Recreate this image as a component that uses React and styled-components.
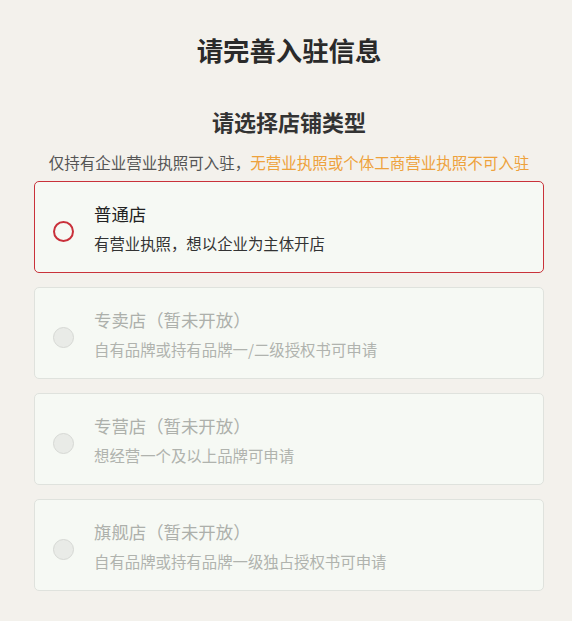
import React from "react";
import styled, { createGlobalStyle } from "styled-components";

const Global = createGlobalStyle`
  html, body { margin: 0; padding: 0; background: #f3f1ec; }
  body { font-family: "Noto Sans CJK SC", "Noto Sans", sans-serif; }
  * { box-sizing: border-box; }
`;

const Page = styled.div`
  width: 572px;
  min-height: 621px;
  background: #f3f1ec;
  padding: 32px 28px 0 34px;
`;

const Title = styled.h1`
  margin: 0;
  font-size: 26.4px;
  line-height: 36px;
  font-weight: 700;
  color: #2a2a2a;
  text-align: center;
`;

const SubTitle = styled.h2`
  margin: 38px 0 0;
  font-size: 22px;
  line-height: 30px;
  font-weight: 700;
  color: #333;
  text-align: center;
`;

const Note = styled.p`
  margin: 15px 0 0;
  font-size: 15.5px;
  line-height: 22px;
  color: #555;
  text-align: center;
  white-space: nowrap;
`;

const Warn = styled.span`
  color: #eea23c;
`;

const List = styled.div`
  margin-top: 8px;
  display: flex;
  flex-direction: column;
  gap: 14px;
`;

const Card = styled.div`
  width: 510px;
  height: 92px;
  display: flex;
  align-items: flex-start;
  background: #f6f9f4;
  border: 1px solid ${(p) => (p.$active ? "#c9323a" : "#dfe2dd")};
  border-radius: 5px;
  padding: 20px 18px 0;
  gap: 20px;
`;

const Radio = styled.span`
  flex: none;
  margin-top: 19px;
  width: 21px;
  height: 21px;
  border-radius: 50%;
  border: ${(p) => (p.$active ? "2px solid #c9303a" : "1.5px solid #d6d8d4")};
  background: ${(p) => (p.$active ? "transparent" : "#e9ebe7")};
`;

const Texts = styled.div`
  display: flex;
  flex-direction: column;
  gap: 6px;
`;

const CardTitle = styled.div`
  font-size: 17.4px;
  line-height: 24px;
  font-weight: 400;
  color: ${(p) => (p.$disabled ? "#adb0ab" : "#222")};
`;

const CardDesc = styled.div`
  font-size: 15.4px;
  line-height: 22px;
  color: ${(p) => (p.$disabled ? "#b0b3ae" : "#333")};
`;

const shops = [
  { title: "普通店", desc: "有营业执照，想以企业为主体开店", active: true },
  { title: "专卖店（暂未开放）", desc: "自有品牌或持有品牌一/二级授权书可申请", disabled: true },
  { title: "专营店（暂未开放）", desc: "想经营一个及以上品牌可申请", disabled: true },
  { title: "旗舰店（暂未开放）", desc: "自有品牌或持有品牌一级独占授权书可申请", disabled: true },
];

export default function App() {
  return (
    <>
      <Global />
      <Page>
        <Title>请完善入驻信息</Title>
        <SubTitle>请选择店铺类型</SubTitle>
        <Note>
          仅持有企业营业执照可入驻，<Warn>无营业执照或个体工商营业执照不可入驻</Warn>
        </Note>
        <List>
          {shops.map((s) => (
            <Card key={s.title} $active={s.active}>
              <Radio $active={s.active} />
              <Texts>
                <CardTitle $disabled={s.disabled}>{s.title}</CardTitle>
                <CardDesc $disabled={s.disabled}>{s.desc}</CardDesc>
              </Texts>
            </Card>
          ))}
        </List>
      </Page>
    </>
  );
}
